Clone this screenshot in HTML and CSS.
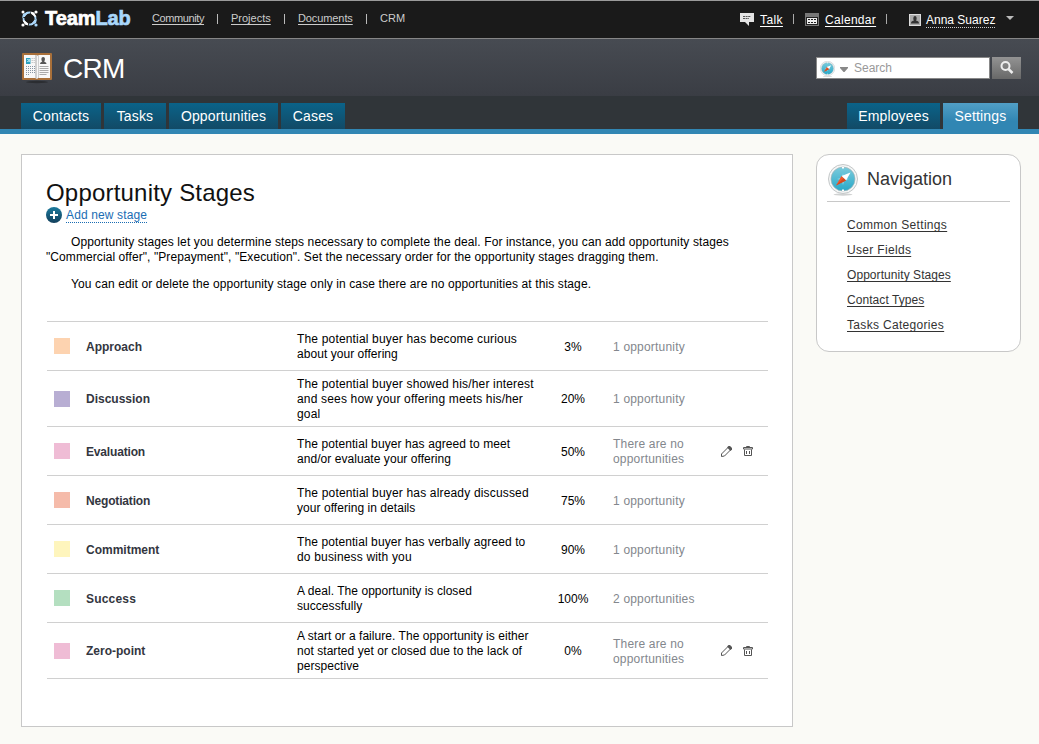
FILE: index.html
```html
<!DOCTYPE html>
<html lang="en">
<head>
<meta charset="utf-8">
<title>CRM - Opportunity Stages</title>
<link rel="stylesheet" href="styles.css">
</head>
<body>
<svg width="0" height="0" class="defs" aria-hidden="true">
  <defs>
    <linearGradient id="dial" x1="0" y1="0" x2="0" y2="1"><stop offset="0" stop-color="#7ccbdc"/><stop offset="1" stop-color="#27a8c8"/></linearGradient>
    <linearGradient id="plus" x1="0" y1="0" x2="0" y2="1"><stop offset="0" stop-color="#1b7a9d"/><stop offset="1" stop-color="#123f5c"/></linearGradient>
    <symbol id="compass" viewBox="0 0 30 32">
      <ellipse cx="15" cy="30.500" rx="9.500" ry="1.200" fill="#d0d2d2"/>
      <circle cx="15" cy="15" r="14.500" fill="#f4f5f5" stroke="#c3c7c8"/>
      <circle cx="15" cy="15" r="12" fill="url(#dial)" stroke="#a5b4b8" stroke-width=".7"/>
      <path d="M15 3v1.500M15 25.500v1.500" stroke="#fff" stroke-width="2"/>
      <path d="M15 9l1.400 4.600L21 15l-4.600 1.400L15 21l-1.400-4.600L9 15l4.600-1.400z" fill="#85d4e6"/>
      <path d="M22.500 8.500l-4.500 8-4.500-4.500z" fill="#fff"/>
      <path d="M8 21.500l5.500-9.500 4.500 4.500z" fill="#f0592a"/>
      <path d="M8 21.500l7.700-7.300 2.300 2.300z" fill="#d04a20"/>
    </symbol>
    <symbol id="pencil" viewBox="0 0 11 11">
      <path d="M.5 10.500V8L7 1.500h1.500L9.500 3v1L3.500 10z" fill="none" stroke="#555"/>
      <path d="M6 1.500L7.500 0H9l2 2v1.500L9.500 5z" fill="#555"/>
    </symbol>
    <symbol id="trash" viewBox="0 0 10 10">
      <path d="M3.500 1V.5h3V1M.5 3V1.500h9V3zM1.500 3.500v6h7v-6M3.500 5v3M6.500 5v3" fill="none" stroke="#555"/>
    </symbol>
  </defs>
</svg>

<div class="topbar">
  <a class="logo">
    <svg width="17" height="17" viewBox="0 0 17 17">
      <circle cx="8.500" cy="8.500" r="6" fill="none" stroke="#fff" stroke-width="1.800" stroke-dasharray="5.600 3.820" transform="rotate(12 8.500 8.500)"/>
      <circle cx="8.500" cy="8.500" r="6" fill="none" stroke="#a9d7fb" stroke-width="1.800" stroke-dasharray="3.500 5.920" transform="rotate(60 8.500 8.500)"/>
      <g fill="#a9d7fb"><path d="M2 4l5-2.500L6 4 4 6.500 1 8zM15 13l-5 2.500 1-2.500 2-2.500L16 9z"/><circle cx="15" cy="15" r="1.600"/></g>
      <g fill="#fff"><path d="M13 2.500L15.500 7l-2.500-1L10.500 4l-1-2.500zM4 14.500L1.500 10l2.500 1 2.500 2 1 2.500z"/><circle cx="2" cy="2" r="1.500"/><circle cx="15" cy="2" r="1.600"/><circle cx="2" cy="15" r="1.600"/></g>
    </svg><span class="logo-text">Team<b>Lab</b></span>
  </a>
  <nav class="modules">
    <a class="m1">Community</a><i></i><a class="m2">Projects</a><i></i><a class="m3">Documents</a><i></i><span>CRM</span>
  </nav>
  <div class="account">
    <svg class="ic-talk" width="14" height="13" viewBox="0 0 14 13"><path d="M0 0h14v9H9v4L5 9H0z" fill="#e4e4e4"/><path d="M3 3.500h8M3 5.500h6" stroke="#555" stroke-dasharray="2 .6"/></svg>
    <a class="talk">Talk</a><i></i>
    <svg class="ic-cal" width="14" height="13" viewBox="0 0 14 13"><path d="M0 0h14v13H0z" fill="#777"/><path d="M1 4h12v8H1z" fill="#222"/><path d="M2 5h10v6H2z" fill="#eee"/><path d="M3 6.500h8M3 9.500h8" stroke="#222" stroke-dasharray="2 1"/></svg>
    <a class="cal">Calendar</a><i></i>
    <svg class="ic-user" width="12" height="12" viewBox="0 0 12 12"><path d="M0 0h12v12H0z" fill="#ddd"/><path d="M1 1h10v10H1z" fill="#aaa"/><path d="M2 9.500c0-2.500 2-2.500 3-3C4 5.500 4 2 6 2s2 3.500 1 4.500c1 .5 3 .5 3 3z" fill="#333"/></svg>
    <a class="user">Anna Suarez</a>
    <svg class="ic-down" width="8" height="4" viewBox="0 0 8 4"><path d="M0 0h8L4 4z" fill="#bbb"/></svg>
  </div>
</div>

<header class="header">
  <svg class="book" width="30" height="31" viewBox="0 0 30 31">
    <ellipse cx="15" cy="29" rx="11" ry="1.200" fill="#2b2d31"/>
    <rect y="0" width="30" height="27" rx="1" fill="#a9703a"/>
    <path d="M2 2h12l1 1 1-1h12v23H16l-1 1-1-1H2z" fill="#f8f8f8"/>
    <path d="M13 2h2v24l-2-1zM16 2h1v23h-1z" fill="#cfcfcf"/>
    <path d="M4 5h4.500v6H4z" fill="#2ca0be"/><path d="M5 6.500h1.500v2H5M7.500 6v3" fill="none" stroke="#bfeaf4" stroke-width=".8"/>
    <path d="M9.500 5.500H13M9.500 7.500H13M9.500 9.500H13" stroke="#ccc" stroke-dasharray="2 .5"/>
    <path d="M4 13.500h9M4 15.500h9M4 17.500h9M4 19.500h9M4 21.500h4" stroke="#8795a3" stroke-dasharray="1 1"/>
    <path d="M18 11c0-2 2-2 2.300-2.500C19 7 19 4 21.200 4s2.200 3 .9 4.500C22.400 9 24.500 9 24.500 11z" fill="#555"/>
    <path d="M17.500 13.500h9M17.500 15.500h9M17.500 17.500h9M17.500 19.500h9M17.500 21.500h7" stroke="#aaa"/>
  </svg>
  <h1>CRM</h1>
  <form class="search">
    <div class="search-box">
      <svg width="15" height="16"><use href="#compass"/></svg>
      <svg class="ic-arrow" width="8" height="5" viewBox="0 0 8 5"><path d="M0 0h8v1L4.500 5h-1L0 1z" fill="#888"/></svg>
      <span>Search</span>
    </div>
    <button type="button" aria-label="Find"><svg width="15" height="15" viewBox="0 0 15 15"><circle cx="5.500" cy="5" r="4" fill="none" stroke="#eee" stroke-width="2"/><path d="M8.500 8l4 4" stroke="#eee" stroke-width="2.500"/></svg></button>
  </form>
</header>

<nav class="tabs">
  <a class="t1">Contacts</a><a class="t2">Tasks</a><a class="t3">Opportunities</a><a class="t4">Cases</a>
  <a class="t5">Employees</a><a class="t6 active">Settings</a>
</nav>

<div class="page">
  <main class="card">
    <h2>Opportunity Stages</h2>
    <div class="add"><svg width="16" height="16" viewBox="0 0 16 16"><circle cx="8" cy="8" r="8" fill="url(#plus)"/><path d="M8 4v8M4 8h8" stroke="#fff" stroke-width="2"/></svg><a>Add new stage</a></div>
    <p class="intro"><span class="l1">Opportunity stages let you determine steps necessary to complete the deal. For instance, you can add opportunity stages</span><br><span class="l2">"Commercial offer", "Prepayment", "Execution". Set the necessary order for the opportunity stages dragging them.</span></p>
    <p class="note">You can edit or delete the opportunity stage only in case there are no opportunities at this stage.</p>
    <div class="stages">
      <div class="row"><i class="sw peach"></i><b>Approach</b><div class="desc">The potential buyer has become curious<br><span class="snug">about your offering</span></div><div class="pct">3%</div><div class="cnt">1 opportunity</div></div>
      <div class="row tall"><i class="sw violet"></i><b>Discussion</b><div class="desc">The potential buyer showed his/her interest<br>and sees how your offering meets his/her<br>goal</div><div class="pct">20%</div><div class="cnt">1 opportunity</div></div>
      <div class="row"><i class="sw pink"></i><b class="narrow">Evaluation</b><div class="desc"><span class="mid">The potential buyer has agreed to meet</span><br><span class="snug">and/or evaluate your offering</span></div><div class="pct">50%</div><div class="cnt">There are no<br>opportunities</div><svg class="edit" width="11" height="11"><use href="#pencil"/></svg><svg width="10" height="10"><use href="#trash"/></svg></div>
      <div class="row"><i class="sw coral"></i><b class="narrow">Negotiation</b><div class="desc">The potential buyer has already discussed<br><span class="snug">your offering in details</span></div><div class="pct">75%</div><div class="cnt">1 opportunity</div></div>
      <div class="row"><i class="sw yellow"></i><b>Commitment</b><div class="desc"><span class="mid">The potential buyer has verbally agreed to</span><br>do business with you</div><div class="pct">90%</div><div class="cnt">1 opportunity</div></div>
      <div class="row"><i class="sw green"></i><b class="wide">Success</b><div class="desc"><span class="snug">A deal. The opportunity is closed<br>successfully</span></div><div class="pct">100%</div><div class="cnt">2 opportunities</div></div>
      <div class="row tall"><i class="sw pink"></i><b>Zero-point</b><div class="desc snug">A start or a failure. The opportunity is either<br>not started yet or closed due to the lack of<br>perspective</div><div class="pct">0%</div><div class="cnt">There are no<br>opportunities</div><svg class="edit" width="11" height="11"><use href="#pencil"/></svg><svg width="10" height="10"><use href="#trash"/></svg></div>
    </div>
  </main>
  <aside class="side">
    <div class="side-head"><svg width="30" height="32"><use href="#compass"/></svg><h3>Navigation</h3></div>
    <ul>
      <li class="loose"><a>Common Settings</a></li><li class="loose"><a>User Fields</a></li><li class="tight"><a>Opportunity Stages</a></li><li class="tight"><a>Contact Types</a></li><li class="loose"><a>Tasks Categories</a></li>
    </ul>
  </aside>
</div>
</body>
</html>
```

FILE: styles.css
```css
* { box-sizing: border-box; }
body { margin: 0; background: #fafaf6; font: 12px/15px "Liberation Sans", Arial, sans-serif; color: #000; height: 744px; overflow: hidden; }
h1, h2, h3, p, ul { margin: 0; padding: 0; font-weight: normal; }
svg { display: block; flex: none; }
i { font-style: normal; flex: none; }
.defs { position: absolute; }

.topbar { height: 39px; background: #1a1a1a; border-top: 1px solid #9b9b9b; border-bottom: 1px solid #868686; display: flex; padding-left: 21px; color: #ccc; }
.logo { display: flex; width: 131px; padding-top: 9px; gap: 7px; color: #fff; }
.logo-text { font-size: 20px; line-height: 17px; font-weight: bold; letter-spacing: -0.1px; -webkit-text-stroke: .7px; }
.logo-text b { color: #a9d7fb; }
.modules { display: flex; font-size: 11px; line-height: 15px; padding-top: 10px; white-space: nowrap; }
.modules a { text-decoration: underline; text-underline-offset: 2px; }
.modules i { width: 1px; height: 10px; background: #bbb; margin: 3px 13px 0; }
.m1 { width: 52px; letter-spacing: -.4px; }
.m2 { width: 40px; }
.m3 { width: 55px; letter-spacing: -.1px; }
.account { margin-left: auto; width: 299px; display: flex; padding-top: 11px; color: #fff; white-space: nowrap; }
.account a { height: 15px; line-height: 16px; }
.account i { width: 1px; height: 10px; background: #aaa; margin-top: 2px; }
.ic-talk { margin-top: 1px; }
.talk, .cal { text-decoration: underline; text-underline-offset: 2px; }
.talk { width: 23px; margin: 0 10px 0 6px; letter-spacing: .4px; }
.ic-cal { margin: 1px 6px 0 11px; }
.cal { width: 51px; margin-right: 10px; letter-spacing: .3px; }
.ic-user { margin: 2px 5px 0 22px; }
.account .user { width: 69px; height: 16px; border-bottom: 1px dotted #ccc; }
.ic-down { margin: 4px 0 0 11px; }

.header { height: 57px; background: linear-gradient(#474b52, #3a3d44); display: flex; padding: 14px 18px 0 22px; color: #fff; }
.header h1 { font-size: 28px; line-height: 32px; margin-left: 11px; letter-spacing: -.7px; }
.search { margin: 4px 0 0 auto; display: flex; gap: 2px; height: 22px; }
.search-box { width: 174px; background: #fff; border: 1px solid #888; display: flex; padding: 3px 0 0 3px; color: #999; }
.search-box span { line-height: 15px; margin-left: 6px; }
.ic-arrow { margin: 6px 0 0 5px; }
.search button { width: 29px; border: 0; padding: 4px 8px; background: linear-gradient(#939393, #686868); display: flex; align-items: flex-start; }

.tabs { height: 38px; background: #303539; border-bottom: 5px solid #3186b3; padding: 7px 21px 0; display: flex; gap: 3px; color: #fff; font-size: 14px; line-height: 26px; letter-spacing: .15px; text-align: center; }
.tabs a { background: linear-gradient(#0b6389, #124a66); height: 26px; }
.tabs .active { background: linear-gradient(#519fc6, #3186b3 70%); }
.t1 { width: 80px; } .t2 { width: 62px; } .t3 { width: 109px; } .t4 { width: 64px; }
.t5 { width: 93px; margin-left: auto; } .t6 { width: 75px; }

.page { display: flex; gap: 23px; padding: 20px 0 0 21px; align-items: flex-start; }
.card { width: 772px; height: 573px; background: #fff; border: 1px solid #c8c8c8; padding: 24px 24px 0; }
.card h2 { font-size: 24px; line-height: 28px; letter-spacing: .2px; color: #111; }
.add { display: flex; gap: 4px; color: #1a6db3; }
.add a { height: 16px; line-height: 17px; letter-spacing: .13px; border-bottom: 1px dotted #1a6db3; }
.intro { margin-top: 12px; white-space: nowrap; text-indent: 25px; }
.l1 { letter-spacing: .12px; }
.l2 { letter-spacing: .08px; }
.note { margin-top: 12px; white-space: nowrap; text-indent: 25px; letter-spacing: .11px; }
.stages { margin: 29px 0 0 1px; border-top: 1px solid #d0d0d0; }
.row { height: 49px; border-bottom: 1px solid #d0d0d0; display: flex; align-items: center; padding-left: 7px; white-space: nowrap; }
.tall { height: 56px; }
.sw { width: 16px; height: 16px; margin-right: 16px; }
.peach { background: #fdd3b0; } .violet { background: #b8aed3; } .pink { background: #efbcd5; } .coral { background: #f5bbaa; } .yellow { background: #fef5bd; } .green { background: #b4dfc0; }
.row b { width: 211px; color: #333640; padding-top: 2px; }
.row .narrow { letter-spacing: -.17px; }
.row .wide { letter-spacing: .2px; }
.desc { width: 250px; letter-spacing: .17px; padding-top: 2px; }
.mid { letter-spacing: .1px; }
.snug { letter-spacing: .05px; }
.pct { width: 52px; text-align: center; padding-top: 2px; }
.cnt { width: 122px; color: #83878d; padding-left: 14px; padding-top: 2px; letter-spacing: .19px; }
.edit { margin-right: 11px; }

.side { width: 205px; height: 198px; border: 1px solid #c8c8c8; border-radius: 13px; background: #fff; padding: 9px 10px; }
.side-head { display: flex; height: 38px; border-bottom: 1px solid #c8c8c8; padding-left: 1px; gap: 9px; }
.side h3 { font-size: 18px; line-height: 30px; color: #333; }
.side ul { list-style: none; padding: 11px 0 0 20px; line-height: 25px; color: #333; }
.side li a { text-decoration: underline; text-underline-offset: 2px; }
.loose { letter-spacing: .32px; }
.tight { letter-spacing: .06px; }
```
